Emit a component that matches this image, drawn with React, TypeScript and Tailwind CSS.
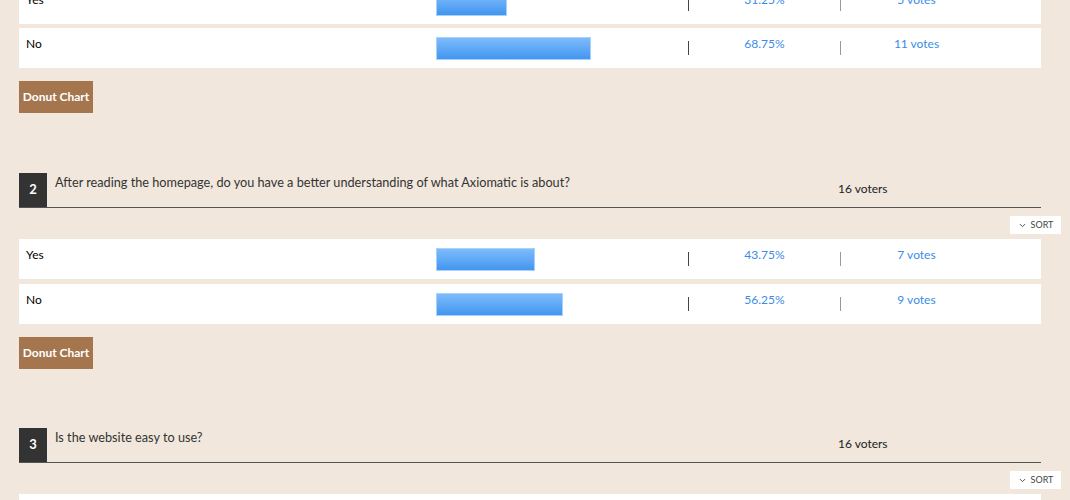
import { ChevronDown } from 'lucide-react'

type Answer = { label: string; pct: number; votes: number }

const questions: { num: number; text: string; voters: number; answers: Answer[] }[] = [
  {
    num: 2,
    text: 'After reading the homepage, do you have a better understanding of what Axiomatic is about?',
    voters: 16,
    answers: [
      { label: 'Yes', pct: 43.75, votes: 7 },
      { label: 'No', pct: 56.25, votes: 9 },
    ],
  },
]

function AnswerRow({ a }: { a: Answer }) {
  return (
    <div className="flex items-center h-[40px] bg-white mr-[20px]">
      <div className="w-[417px] pl-[7px] mb-[8px] text-[12px] text-black">{a.label}</div>
      <div className="w-[252px] flex items-center">
        <div
          className="h-[23px] bg-gradient-to-b from-[#7dbbfb] to-[#4196ef] border border-[#a9d2fb]"
          style={{ width: `${(a.pct / 100) * 226}px` }}
        />
      </div>
      <div className="w-[152px] flex items-center">
        <span className="w-px h-[14px] bg-[#444]" />
        <span className="flex-1 mb-[8px] text-center text-[12px] text-[#3a8ce8]">{a.pct.toFixed(2)}%</span>
      </div>
      <div className="w-[152px] flex items-center">
        <span className="w-px h-[14px] bg-[#999]" />
        <span className="flex-1 mb-[8px] text-center text-[12px] text-[#3a8ce8]">
          {a.votes} votes
        </span>
      </div>
    </div>
  )
}

function QuestionHeader({ num, text, voters }: { num: number; text: string; voters: number }) {
  return (
    <>
      <div className="flex mr-[20px] border-b border-[#555]">
        <div className="w-[28px] h-[34px] bg-[#333] text-white font-bold text-[13px] flex items-center justify-center">
          {num}
        </div>
        <div className="flex-1 pl-[8px] text-[12.7px] text-[#333]">{text}</div>
        <div className="w-[203px] self-center pb-[3px] text-[12px] text-[#222]">{voters} voters</div>
      </div>
      <div className="flex justify-end mt-[8px]">
        <button className="w-[51px] h-[18px] bg-white flex items-center justify-center gap-[4px] text-[9px] text-[#444]">
          <ChevronDown className="h-[9px] w-[9px]" strokeWidth={2.5} />
          SORT
        </button>
      </div>
    </>
  )
}

function DonutButton() {
  return (
    <button className="mt-[13px] w-[74px] h-[32px] bg-[#a5764e] text-white text-[12px] font-bold">
      Donut Chart
    </button>
  )
}

export default function App() {
  return (
    <div
      className="min-h-screen bg-[#f1e7dc] overflow-hidden"
      style={{ fontFamily: 'Lato, "Open Sans", sans-serif' }}
    >
      <div className="pl-[19px] pr-[9px] mt-[-16px]">
        {/* tail of question 1 */}
        <div className="flex flex-col gap-[4px]">
          <AnswerRow a={{ label: 'Yes', pct: 31.25, votes: 5 }} />
          <AnswerRow a={{ label: 'No', pct: 68.75, votes: 11 }} />
        </div>
        <DonutButton />

        {questions.map((q) => (
          <div key={q.num} className="mt-[60px]">
            <QuestionHeader num={q.num} text={q.text} voters={q.voters} />
            <div className="flex flex-col gap-[5px] mt-[5px]">
              {q.answers.map((a) => (
                <AnswerRow key={a.label} a={a} />
              ))}
            </div>
            <DonutButton />
          </div>
        ))}

        <div className="mt-[59px]">
          <QuestionHeader num={3} text="Is the website easy to use?" voters={16} />
          <div className="flex flex-col gap-[5px] mt-[5px]">
            <AnswerRow a={{ label: 'Yes', pct: 50, votes: 8 }} />
          </div>
        </div>
      </div>
    </div>
  )
}
